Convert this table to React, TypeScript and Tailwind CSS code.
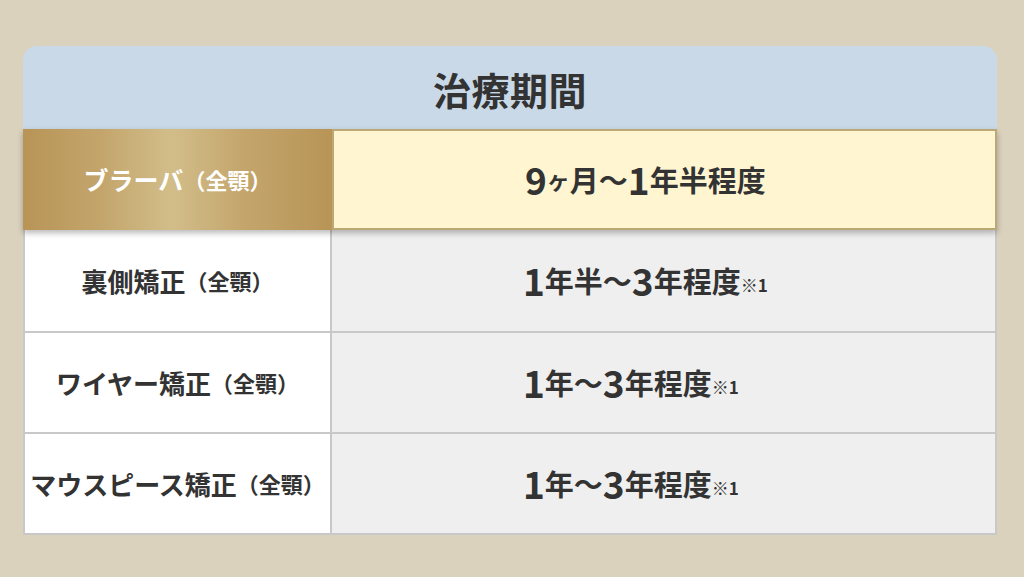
const font = {
  fontFamily: '"Noto Sans CJK JP", "Noto Sans", sans-serif',
};

type Row = { label: string; main: string; note?: boolean };

const rows: Row[] = [
  { label: '裏側矯正', main: '1年半〜3年程度', note: true },
  { label: 'ワイヤー矯正', main: '1年〜3年程度', note: true },
  { label: 'マウスピース矯正', main: '1年〜3年程度', note: true },
];

function Period({ text }: { text: string }) {
  // digits render larger than kanji
  const parts = text.split(/(\d+)/).filter(Boolean);
  return (
    <>
      {parts.map((p, i) =>
        /\d/.test(p) ? (
          <span key={i} className="text-[37px]">
            {p}
          </span>
        ) : (
          <span key={i} className="text-[29px]">
            {p}
          </span>
        ),
      )}
    </>
  );
}

export default function App() {
  return (
    <div
      className="min-h-[577px] w-full bg-[#dad2bd] pt-[46px] text-[#333333]"
      style={font}
    >
      <div className="ml-[23px] w-[974px]">
        <div className="flex h-[83px] items-center justify-center rounded-t-[14px] bg-[#c9d9e7] pt-[2px]">
          <h1 className="text-[38px] font-bold tracking-[0.5px]">治療期間</h1>
        </div>

        <div className="relative z-10 grid h-[101px] grid-cols-[309px_1fr] shadow-[0_3px_6px_rgba(0,0,0,0.28)]">
          <div className="flex items-center justify-center bg-[linear-gradient(90deg,#b89456_0%,#c3a56c_25%,#d2bd89_48%,#c3a56c_72%,#b89456_100%)] text-white">
            <span className="text-[25px] font-bold">ブラーバ</span>
            <span className="text-[22px] font-bold">（全顎）</span>
          </div>
          <div className="flex items-center border-2 border-[#bca874] bg-[#fff6d1] pl-[191px] font-bold leading-none">
            <span className="text-[37px]">9</span>
            <span className="text-[23px]">ヶ</span>
            <span className="text-[29px]">月〜</span>
            <span className="text-[37px]">1</span>
            <span className="text-[29px]">年半程度</span>
          </div>
        </div>

        <div className="border-2 border-t-0 border-[#c8c8c8]">
          {rows.map((r, i) => (
            <div
              key={r.label}
              className={`grid h-[101px] grid-cols-[307px_1fr] ${
                i > 0 ? 'border-t-2 border-[#c8c8c8]' : ''
              }`}
            >
              <div className="flex items-center justify-center border-r-2 border-[#c8c8c8] bg-white font-bold">
                <span className="text-[26px]">{r.label}</span>
                <span className="text-[22px]">（全顎）</span>
              </div>
              <div className="flex items-center bg-[#efefef] pl-[191px] font-bold leading-none">
                <Period text={r.main} />
                {r.note && (
                  <span className="mt-[8px] text-[17px]">※1</span>
                )}
              </div>
            </div>
          ))}
        </div>
      </div>
    </div>
  );
}
